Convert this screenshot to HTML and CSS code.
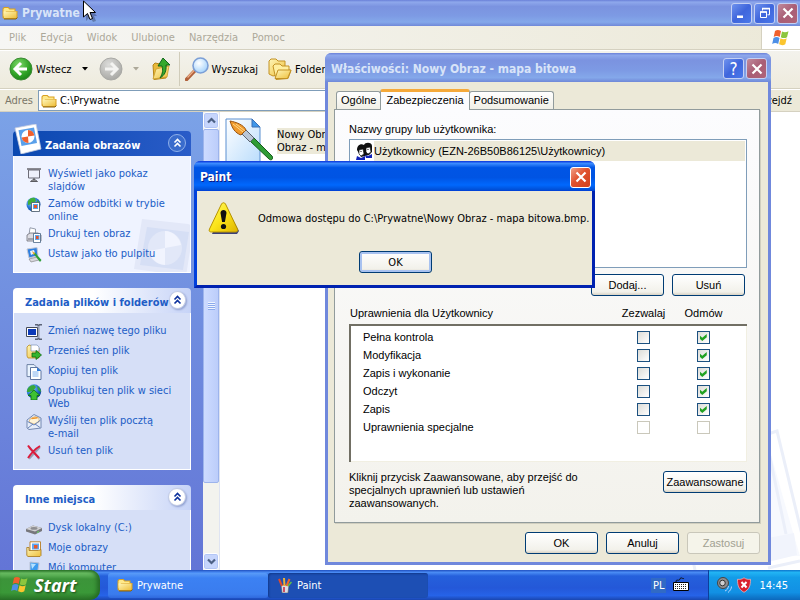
FILE: index.html
```html
<!DOCTYPE html>
<html lang="pl">
<head>
<meta charset="utf-8">
<title>Prywatne</title>
<link rel="stylesheet" href="styles.css">
</head>
<body>
<svg class="defs" aria-hidden="true">
  <defs>
    <linearGradient id="gFolder" x1="0" y1="0" x2="1" y2="1"><stop offset="0" stop-color="#fff6b8"/><stop offset="1" stop-color="#eebf3c"/></linearGradient>
    <radialGradient id="gGreen" cx=".4" cy=".3" r=".8"><stop offset="0" stop-color="#7fd86a"/><stop offset=".6" stop-color="#2fa326"/><stop offset="1" stop-color="#157a15"/></radialGradient>
    <radialGradient id="gGrey" cx=".4" cy=".3" r=".8"><stop offset="0" stop-color="#dcdcda"/><stop offset="1" stop-color="#a2a29e"/></radialGradient>
    <radialGradient id="gLens" cx=".4" cy=".35" r=".7"><stop offset="0" stop-color="#ffffff"/><stop offset="1" stop-color="#9fd0fb"/></radialGradient>
    <linearGradient id="gWarn" x1="0" y1="0" x2="1" y2="1"><stop offset="0" stop-color="#fffb6a"/><stop offset=".5" stop-color="#fbe41a"/><stop offset="1" stop-color="#dfb400"/></linearGradient>
    <linearGradient id="gPage" x1="0" y1="0" x2="1" y2="1"><stop offset="0" stop-color="#ffffff"/><stop offset="1" stop-color="#b9dcfc"/></linearGradient>
    <radialGradient id="gGlobe" cx=".35" cy=".3" r=".8"><stop offset="0" stop-color="#8fd0ff"/><stop offset=".6" stop-color="#1f6fd0"/><stop offset="1" stop-color="#0b3a86"/></radialGradient>
    <symbol id="folder" viewBox="0 0 16 16"><path d="M.5 12.500V3.500L2 2h4.500L8 3.500h5.500V6H15.500v6L14 14H2z" fill="#d9a020"/><path d="M1.500 12V4L2.500 3H6l1.500 1.500h5V6H4z" fill="#ffe98a"/><path d="M1.500 6.500h13v6l-1 .5h-11.500z" fill="url(#gFolder)"/><path d="M2 14h12l1.500-1.500" fill="none" stroke="#8a6410"/></symbol>
    <symbol id="flag" viewBox="0 0 20 20"><path d="M4 3c2-1.500 4-1.200 6 0l-1.300 6c-2-1.200-4-1.200-6 0z" fill="#f0602c"/><path d="M11 3.500c2 1 4 1.200 6.500-.3L16 9.200c-2.200 1.300-4.200 1-6.200 0z" fill="#8cc63e"/><path d="M2.500 10c2-1.200 4-1.200 6 0l-1.300 6c-2-1.200-4-1.200-6 0z" fill="#4d8fe6"/><path d="M9.500 10.300c2 1.100 4 1.200 6.200 0l-1.400 6c-2.200 1.200-4.200 1-6.200 0z" fill="#fbc52e"/></symbol>
    <symbol id="photo" viewBox="0 0 28 30"><path d="M1 4L22 0l5 25-20 5z" fill="#fff" stroke="#c3cbe0" stroke-width=".8"/><path d="M4.500 6.200L20 3.400l3 15.600L7.500 22z" fill="#5aa0ea"/><circle cx="14" cy="12.500" r="6.500" fill="#fff"/><path d="M14 12.500V6a6.500 6.500 0 0 1 6.300 5.500zM14 12.500l.5 6.500a6.500 6.500 0 0 1-6.800-5.500z" fill="#f0602c"/></symbol>
    <symbol id="slides" viewBox="0 0 16 16"><path d="M1 1h14v2H1z" fill="#8a8a92"/><path d="M2.500 3h11v8h-11z" fill="#eef0fb" stroke="#6d6d78"/><path d="M8 11v3M4.500 14.500L8 12l3.500 2.500z" stroke="#5a5a60" fill="#b8b8b8"/></symbol>
    <symbol id="prints" viewBox="0 0 16 16"><circle cx="7.500" cy="7.500" r="7" fill="url(#gGlobe)"/><path d="M2 4c2-3 4-3.500 7-3l1 3-4 3-4 1zM11 3l3 3-1 2-2-1z" fill="#3fae3c"/><path d="M5.500 5.500h8v9h-8z" fill="#fff" stroke="#456" stroke-width=".8"/><path d="M7 7h5v5H7z" fill="#58a4ee"/><path d="M8 8h3v3H8z" fill="#e8562a"/></symbol>
    <symbol id="printer" viewBox="0 0 16 16"><path d="M4 .8L9.500 2v6H3z" fill="#fff" stroke="#7c8698" stroke-width=".8"/><path d="M1 8l3-2h8l3 2v6H1z" fill="#dcdce2" stroke="#70707a" stroke-width=".8"/><path d="M2 12h6" stroke="#6b6b74"/><path d="M7.500 6.500h7v9h-7z" fill="#fff" stroke="#357" stroke-width=".7"/><path d="M9 8h4.500v5H9z" fill="#5ba8f0"/><path d="M10 9h2.500v3H10z" fill="#e5532a"/></symbol>
    <symbol id="desktop" viewBox="0 0 16 16"><path d="M1 2l10-1.500 1 8L3 11z" fill="#2f7fe0" stroke="#c4c8d4"/><path d="M4 4l4-1 1 3-4 2z" fill="#e9f4ff"/><path d="M3 12l8-2 2 3-8 2z" fill="#d8d8de" stroke="#777" stroke-width=".6"/><path d="M7 6l2-.5 6.500 7.500-1.500 2z" fill="#2fa038"/><path d="M6 4l3 2-1.500 2z" fill="#f5a632"/></symbol>
    <symbol id="rename" viewBox="0 0 16 16"><path d="M.5 3.500h11v9H.5z" fill="#fff" stroke="#444a58"/><path d="M2 5h8v6H2z" fill="#0b39b8"/><path d="M9 .8h2.500l1 1 1-1H16M12.500 2v12M9 15.200h2.500l1-1 1 1H16" stroke="#5b6377" stroke-width="1.600" fill="none"/><path d="M12.500 2v12" stroke="#c9cee0" stroke-width=".6"/></symbol>
    <symbol id="move" viewBox="0 0 16 16"><path d="M1 3l2-2 4 1 1 2h5v10H2L1 12z" fill="url(#gFolder)" stroke="#b98a1c" stroke-width=".8"/><path d="M5 1h6l2 2v4H5z" fill="#fff" stroke="#7c93b8" stroke-width=".7"/><path d="M6 9h4V6.500l5.500 4.500L10 15.500V13H6z" fill="#33b52e" stroke="#106b12" stroke-width=".8"/></symbol>
    <symbol id="copy" viewBox="0 0 16 16"><path d="M1 .6h7l3 3v9H1z" fill="#eaf4ff" stroke="#62779b" stroke-width=".9"/><path d="M4.500 3.500h7l3.500 3.200v8.800H4.500z" fill="#fff" stroke="#4f6896" stroke-width=".9"/><path d="M11 3.500l4 3.500h-4z" fill="#2b78d8"/><path d="M6.500 8h6M6.500 10h6M6.500 12h6" stroke="#7db0ee"/></symbol>
    <symbol id="publish" viewBox="0 0 16 16"><circle cx="8" cy="7.500" r="7.200" fill="url(#gGlobe)"/><path d="M1 8c0-4 3-7 7-7l2 2-3 4-4 1zM11 2c2 1 4 3 4 6l-3-2z" fill="#38a83a"/><path d="M8 6l6 5.500h-3V16H5v-4.500H2z" fill="#3fc233" stroke="#0d6d14" stroke-width=".8"/></symbol>
    <symbol id="mail" viewBox="0 0 16 16"><path d="M1 6l7-5.500L15 4v10L3 15.500 1 14z" fill="#e6edfa" stroke="#6a7fa8" stroke-width=".9"/><path d="M4 5l5-2.500L13 4v4L8 10 3 8z" fill="#fff4d8" stroke="#c08b34" stroke-width=".5"/><path d="M5.500 4.500l6-.8" stroke="#f0962a" stroke-width="1.500"/><path d="M1.500 7.500L8 11l6.500-5M2 14l5-4M14 13.500L9 10" stroke="#5c7ab6" stroke-width=".9" fill="none"/></symbol>
    <symbol id="delete" viewBox="0 0 16 16"><path d="M3.500 3.500l10 11.500M14 3L3 14.800" stroke="#9a9fb4" stroke-width="2"/><path d="M2 1.500C5 6 9 9.500 13 14M14 2C9 5 5 9.500 2 14" stroke="#dc1c3c" stroke-width="2" fill="none"/></symbol>
    <symbol id="disk" viewBox="0 0 16 16"><path d="M0 8l7-3.500L16 7v3L9 13.500 0 10.500z" fill="#77777c"/><path d="M0 8l7-3.500L16 7l-7 3.500z" fill="#d0d0d2"/><ellipse cx="8" cy="7.400" rx="3.500" ry="1.300" fill="#8e8e92"/><path d="M11 11.500l2-1" stroke="#5ee05a"/></symbol>
    <symbol id="pictures" viewBox="0 0 16 16"><path d="M4 .8h10.500v11H4z" fill="#fff" stroke="#b77c24" stroke-width=".9"/><path d="M6 2.500h7v6H6z" fill="#5da6f0"/><path d="M8 4h3.500v3.500H8z" fill="#e8582a"/><path d="M.8 6.500H3v3h9.500l2.500-1v6l-1 1H2l-1.200-1z" fill="url(#gFolder)" stroke="#a47518" stroke-width=".8"/></symbol>
    <symbol id="computer" viewBox="0 0 16 16"><path d="M4 1l9 1-1.500 10-7.500-2z" fill="#3d9bef" stroke="#b8c0d4"/><path d="M5 2.500l5 .5-4 5z" fill="#b6e2ff"/><path d="M3 13l8 2 2-2" fill="none" stroke="#888"/></symbol>
    <symbol id="chev" viewBox="0 0 9 11"><path d="M1.500 4.500l3-3 3 3M1.500 8.500l3-3 3 3" fill="none" stroke="currentColor" stroke-width="1.600"/></symbol>
    <symbol id="x" viewBox="0 0 12 12"><path d="M1.500 1.500l9 9M10.500 1.500l-9 9" stroke="#fff" stroke-width="2.200"/></symbol>
    <symbol id="arrow" viewBox="0 0 9 7"><path d="M1 1.500l3.500 3.500L8 1.500" fill="none" stroke="#4d6185" stroke-width="2.200"/></symbol>
  </defs>
</svg>

<div class="desktop">
  <main class="explorer">
    <header class="title title-main">
      <svg class="i16"><use href="#folder"/></svg>
      <h1>Prywatne</h1>
      <button class="cap" aria-label="Minimalizuj"><svg viewBox="0 0 12 12"><path d="M1 8.500h6v2.500H1z" fill="#fff"/></svg></button>
      <button class="cap" aria-label="Przywróć"><svg viewBox="0 0 12 12"><path d="M3.500 3.500V1.800h7v6H8.500M1.500 5h6v5.500h-6z" fill="none" stroke="#fff"/><path d="M3 1.500h8M1 5h7" stroke="#fff" stroke-width="1.600"/></svg></button>
      <button class="cap cap-dim" aria-label="Zamknij"><svg><use href="#x"/></svg></button>
    </header>
    <nav class="menubar">
      <button>Plik</button><button>Edycja</button><button>Widok</button><button>Ulubione</button><button>Narzędzia</button><button>Pomoc</button>
      <span class="brand"><svg><use href="#flag"/></svg></span>
    </nav>
    <div class="toolbar">
      <button class="tool"><svg class="i24" viewBox="0 0 24 24"><circle cx="12" cy="12" r="11" fill="url(#gGreen)" stroke="#3c8a34"/><path d="M12 6l-6 6 6 6M6.500 12H18" fill="none" stroke="#fff" stroke-width="3"/></svg>Wstecz</button>
      <button class="drop" aria-label="Historia wstecz"><svg viewBox="0 0 6 4"><path d="M0 0h6L3 3.500z"/></svg></button>
      <button class="tool" aria-label="Dalej"><svg class="i24" viewBox="0 0 24 24"><circle cx="12" cy="12" r="11" fill="url(#gGrey)" stroke="#a9a9a5"/><path d="M12 6l6 6-6 6M17.500 12H6" fill="none" stroke="#f3f3f1" stroke-width="3"/></svg></button>
      <button class="drop drop-off" aria-label="Historia dalej"><svg viewBox="0 0 6 4"><path d="M0 0h6L3 3.500z"/></svg></button>
      <button class="tool" aria-label="Do góry"><svg class="i24" viewBox="0 0 24 24"><path d="M3 8l2-2 5 1 2 2 5-1-1 13-12 1.500z" fill="#e9b93a" stroke="#b5851a"/><path d="M3 22l3-10 13-3-2 11z" fill="url(#gFolder)" stroke="#c99a28" stroke-width=".8"/><path d="M13 1l7 7h-4c.5 6-1 10-6 13 3-5 3-8 2-12H8z" fill="#35a82c" stroke="#12661a"/></svg></button>
      <span class="sep"></span>
      <button class="tool"><svg class="i24" viewBox="0 0 24 24"><path d="M1.500 22.500l9-9.500" stroke="#b0603a" stroke-width="3.500" stroke-linecap="round"/><path d="M2.500 20.500l7-7.500" stroke="#efb08a" stroke-width="1.200"/><circle cx="15.500" cy="8.500" r="7.500" fill="url(#gLens)" stroke="#7c9fd6" stroke-width="1.600"/></svg>Wyszukaj</button>
      <button class="tool tool-last"><svg class="i24" viewBox="0 0 24 24"><path d="M1 4l2-2h5l2 2h7v12L5 19 1 17z" fill="url(#gFolder)" stroke="#c39224"/><path d="M5 9l2-2h5l2 2h7v4l2 .5-3 8-12 1z" fill="#ffefa0" stroke="#c39224"/><path d="M7 21.500L10 13h13l-3.500 8.500z" fill="url(#gFolder)" stroke="#c39224"/></svg>Foldery</button>
    </div>
    <div class="address">
      <label for="path">Adres</label>
      <div class="field"><svg class="i16"><use href="#folder"/></svg><input id="path" type="text" value="C:\Prywatne"></div>
      <button>Przejdź</button>
    </div>
    <div class="content">
      <aside class="side">
        <section class="panel panel-main">
          <header><svg class="photo"><use href="#photo"/></svg><h2>Zadania obrazów</h2><button class="round" aria-label="Zwiń"><svg><use href="#chev"/></svg></button></header>
          <ul>
            <li><svg class="i16"><use href="#slides"/></svg><a href="#">Wyświetl jako pokaz slajdów</a></li>
            <li><svg class="i16"><use href="#prints"/></svg><a href="#">Zamów odbitki w trybie online</a></li>
            <li><svg class="i16"><use href="#printer"/></svg><a href="#">Drukuj ten obraz</a></li>
            <li><svg class="i16"><use href="#desktop"/></svg><a href="#">Ustaw jako tło pulpitu</a></li>
          </ul>
          <svg class="ghost" viewBox="0 0 57 54"><path d="M9 1l46 5 6 2-8 50-52-7z" fill="#e3e8f8"/><path d="M14 9l42 5-6 38-43-5z" fill="#d6dff5"/><circle cx="32" cy="30" r="17" fill="#e2e8f8"/><path d="M32 30V13a17 17 0 0 1 16 14zM32 30v17a17 17 0 0 1-16-14z" fill="#f1f4fe"/></svg>
        </section>
        <section class="panel">
          <header><h2>Zadania plików i folderów</h2><button class="round" aria-label="Zwiń"><svg><use href="#chev"/></svg></button></header>
          <ul>
            <li><svg class="i16"><use href="#rename"/></svg><a href="#">Zmień nazwę tego pliku</a></li>
            <li><svg class="i16"><use href="#move"/></svg><a href="#">Przenieś ten plik</a></li>
            <li><svg class="i16"><use href="#copy"/></svg><a href="#">Kopiuj ten plik</a></li>
            <li><svg class="i16"><use href="#publish"/></svg><a href="#">Opublikuj ten plik w sieci Web</a></li>
            <li><svg class="i16"><use href="#mail"/></svg><a href="#">Wyślij ten plik pocztą<br>e-mail</a></li>
            <li><svg class="i16"><use href="#delete"/></svg><a href="#">Usuń ten plik</a></li>
          </ul>
        </section>
        <section class="panel">
          <header><h2>Inne miejsca</h2><button class="round" aria-label="Zwiń"><svg><use href="#chev"/></svg></button></header>
          <ul>
            <li><svg class="i16"><use href="#disk"/></svg><a href="#">Dysk lokalny (C:)</a></li>
            <li><svg class="i16"><use href="#pictures"/></svg><a href="#">Moje obrazy</a></li>
            <li><svg class="i16"><use href="#computer"/></svg><a href="#">Mój komputer</a></li>
          </ul>
        </section>
      </aside>
      <div class="scroll">
        <button aria-label="W górę"><svg class="up"><use href="#arrow"/></svg></button>
        <div class="thumb"><i></i></div>
        <span class="track"></span>
        <button aria-label="W dół"><svg><use href="#arrow"/></svg></button>
      </div>
      <div class="files">
        <div class="file">
          <svg class="i48" viewBox="0 0 48 48"><path d="M1 2h26l8 8v37H1z" fill="url(#gPage)" stroke="#5b8fd0"/><path d="M27 2l8 8h-8z" fill="#3f97ea" stroke="#3a6eb4"/><path d="M25 24l4-3 18 18c2 3-1 5-3 3z" fill="#2f9c35" stroke="#155c1c"/><path d="M17 17l4-4 8 8-4 4z" fill="#b9c6d6" stroke="#5c6470"/><path d="M5 4c6 1 14 4 16 9l-5 5C10 16 7 11 5 4z" fill="#f09a2c" stroke="#9a5410"/><path d="M8 7l10 8M11 7l9 7" stroke="#ffd98a"/></svg>
          <span>Nowy Obraz<br>Obraz - mapa</span>
        </div>
        <svg class="watermark" viewBox="0 0 160 150"><path d="M128 24l26 92 6 20H128z" fill="#f7f9fe"/><path d="M128 14l9-3 25 104M128 28l18 86" fill="none" stroke="#ebeff9" stroke-width="3"/><path d="M128 118l26-5 3 22-29 7z" fill="#f1f4fc"/><path d="M40 136h12l3 14M128 148l32-7" fill="none" stroke="#ebeff9" stroke-width="3"/></svg>
      </div>
    </div>
  </main>

  <section class="window props" role="dialog" aria-label="Właściwości: Nowy Obraz - mapa bitowa">
    <header class="title">
      <h2>Właściwości: Nowy Obraz - mapa bitowa</h2>
      <button class="cap cap-help" aria-label="Pomoc">?</button>
      <button class="cap cap-dim" aria-label="Zamknij"><svg><use href="#x"/></svg></button>
    </header>
    <div class="props-body">
      <div class="tabs" role="tablist">
        <button role="tab">Ogólne</button><button role="tab" class="on" aria-selected="true">Zabezpieczenia</button><button role="tab">Podsumowanie</button>
      </div>
      <div class="sheet">
        <p class="caption">Nazwy grupy lub użytkownika:</p>
        <div class="users">
          <div class="user"><svg class="i18" viewBox="0 0 18 18"><path d="M2 8c0-5 4-7 7-5 1-3 8-3 8 1v6l-3 3-8 2z" fill="#111"/><path d="M4 8l4-1 1 5-3 2-2-2zM11 6l4-1 1 5-3 2-2-2z" fill="#fff" stroke="#111" stroke-width=".6"/><path d="M2 14l4 2 4-2v4H1zM10 13l3 1 4-2v4h-6z" fill="#1223b8"/><path d="M5.500 9.500h1M12.500 7.500h1" stroke="#111"/></svg><span>Użytkownicy (EZN-26B50B86125\Użytkownicy)</span></div>
        </div>
        <div class="row-end"><button class="btn">Dodaj...</button><button class="btn">Usuń</button></div>
        <table class="perms">
          <thead><tr><th>Uprawnienia dla Użytkownicy</th><th>Zezwalaj</th><th>Odmów</th></tr></thead>
          <tbody>
            <tr><td>Pełna kontrola</td><td><input type="checkbox" aria-label="Pełna kontrola: zezwalaj"></td><td><input type="checkbox" checked aria-label="Pełna kontrola: odmów"></td></tr>
            <tr><td>Modyfikacja</td><td><input type="checkbox" aria-label="Modyfikacja: zezwalaj"></td><td><input type="checkbox" checked aria-label="Modyfikacja: odmów"></td></tr>
            <tr><td>Zapis i wykonanie</td><td><input type="checkbox" aria-label="Zapis i wykonanie: zezwalaj"></td><td><input type="checkbox" checked aria-label="Zapis i wykonanie: odmów"></td></tr>
            <tr><td>Odczyt</td><td><input type="checkbox" aria-label="Odczyt: zezwalaj"></td><td><input type="checkbox" checked aria-label="Odczyt: odmów"></td></tr>
            <tr><td>Zapis</td><td><input type="checkbox" aria-label="Zapis: zezwalaj"></td><td><input type="checkbox" checked aria-label="Zapis: odmów"></td></tr>
            <tr><td>Uprawnienia specjalne</td><td><input type="checkbox" disabled aria-label="Uprawnienia specjalne: zezwalaj"></td><td><input type="checkbox" disabled aria-label="Uprawnienia specjalne: odmów"></td></tr>
          </tbody>
        </table>
        <div class="advanced">
          <p>Kliknij przycisk Zaawansowane, aby przejść do specjalnych uprawnień lub ustawień zaawansowanych.</p>
          <button class="btn btn-wide">Zaawansowane</button>
        </div>
      </div>
      <footer class="row-end"><button class="btn">OK</button><button class="btn">Anuluj</button><button class="btn" disabled>Zastosuj</button></footer>
    </div>
  </section>

  <section class="window paint" role="alertdialog" aria-label="Paint">
    <header class="title title-active">
      <h2>Paint</h2>
      <button class="cap cap-close" aria-label="Zamknij"><svg><use href="#x"/></svg></button>
    </header>
    <div class="paint-body">
      <div class="message">
        <svg class="i32" viewBox="0 0 32 32"><path d="M17 3l14 26-2 3H4z" fill="#3a3f78"/><path d="M13.500 2c1-1.700 3-1.700 4 0l12 25c.8 2-.2 3-2 3h-24C1.500 30 .6 29 1.500 27z" fill="url(#gWarn)" stroke="#b89400"/><path d="M12.500 11c0-4 6-4 6 0l-1.600 9h-2.800z" fill="#111"/><circle cx="15.500" cy="24.500" r="2.600" fill="#111"/></svg>
        <p>Odmowa dostępu do C:\Prywatne\Nowy Obraz - mapa bitowa.bmp.</p>
      </div>
      <button class="btn btn-default">OK</button>
    </div>
  </section>

  <svg class="cursor" viewBox="0 0 14 22"><path d="M3 4v17l4-4 3 5 3-1-2-5h3z" fill="#000" opacity=".25"/><path d="M.5 1v16l4-3.500 2.500 6 2.500-1L7 12.500h5.500z" fill="#fff" stroke="#000"/></svg>
</div>

<footer class="taskbar">
  <button class="start"><svg><use href="#flag"/></svg>Start</button>
  <button class="task"><svg class="i16"><use href="#folder"/></svg>Prywatne</button>
  <button class="task task-on"><svg class="i16" viewBox="0 0 16 16"><path d="M4 8h8l-1 8H5z" fill="#d8dce6" stroke="#555" stroke-width=".6"/><path d="M5 9L2 2" stroke="#e04a2a" stroke-width="2"/><path d="M7.500 9L7 1" stroke="#f0b030" stroke-width="2"/><path d="M9.500 9l3-7" stroke="#f06a2a" stroke-width="2"/><path d="M11 9l3.500-4" stroke="#5fc04a" stroke-width="1.500"/><path d="M7 10v5" stroke="#c23" stroke-width="1.500"/></svg>Paint</button>
  <span class="lang">PL</span>
  <svg class="i16 kb" viewBox="0 0 16 16"><path d="M3 5c0-4 3 0 4-3s3 1 4-1" fill="none" stroke="#111"/><path d="M.5 5.500h15v8H.5z" fill="#fff" stroke="#000"/><path d="M2 7.500h12M2 9.500h12M2 11.500h12" stroke="#222" stroke-dasharray="1 1"/></svg>
  <div class="tray">
    <svg class="i16" viewBox="0 0 16 16"><circle cx="6" cy="6" r="5.500" fill="#8d8d90" stroke="#444"/><circle cx="5.500" cy="6" r="2.800" fill="#d0d0d2" stroke="#333"/><path d="M8 14c2-1 3-2 3.500-5M11 15.500c2-1.500 3.500-4 3.500-6" fill="none" stroke="#b8d4ff"/></svg>
    <svg class="i16" viewBox="0 0 16 16"><path d="M8 .8c2 1.500 4 1.800 6.500 1.500 0 6-1 10-6.500 13C2.500 12.300 1.500 8.300 1.500 2.300 4 2.600 6 2.300 8 .8z" fill="#d8202c" stroke="#fbb" stroke-width=".7"/><path d="M5.500 5l5 5.500M10.500 5l-5 5.500" stroke="#fff" stroke-width="2"/></svg>
    <time>14:45</time>
  </div>
</footer>
</body>
</html>
```
FILE: styles.css
```css
* { box-sizing: border-box; }
html, body { height: 100%; }
body {
  margin: 0;
  display: flex;
  flex-direction: column;
  overflow: hidden;
  font: 11px/13px "DejaVu Sans Condensed", "DejaVu Sans", sans-serif;
  color: #000;
}
h1, h2, p, ul { margin: 0; padding: 0; font-size: inherit; }
ul { list-style: none; }
button, input { font: inherit; color: inherit; margin: 0; padding: 0; border: 0; background: none; }
svg { display: block; flex: none; }
.defs { position: absolute; width: 0; height: 0; }
.i16 { width: 16px; height: 16px; }
.i18 { width: 18px; height: 18px; }
.i24 { width: 24px; height: 24px; }
.i32 { width: 32px; height: 32px; }
.i48 { width: 48px; height: 48px; }

.desktop { position: relative; flex: 1; min-height: 0; display: flex; }
.explorer { flex: 1; min-width: 0; display: flex; flex-direction: column; background: #ece9d8; }

/* Title bars */
.title {
  display: flex;
  align-items: center;
  gap: 2px;
  height: 29px;
  padding: 2px 4px 0 6px;
  font: bold 12px/16px "DejaVu Sans Condensed", "DejaVu Sans", sans-serif;
  color: #d8e4f8;
  background: linear-gradient(#6a80d8, #8ea8ec 8%, #7b93e0 25%, #7d9ae4 60%, #84a8ea 85%, #7088d8);
  border-radius: 6px 6px 0 0;
}
.title h1, .title h2 { flex: 1; white-space: nowrap; }
.title-main { height: 26px; padding: 0 2px; border-radius: 0; }
.title-main h1 { padding-left: 2px; }
.title-active {
  color: #fff;
  text-shadow: 1px 1px #0a1883;
  background: linear-gradient(#0831d9, #3c8cff 8%, #0055e5 22%, #0054e3 55%, #0068fd 80%, #0050d8 95%, #003dd7);
}
.cap {
  display: grid;
  place-items: center;
  width: 21px;
  height: 21px;
  border: 1px solid #c4d0f4;
  border-radius: 3px;
  background: linear-gradient(135deg, #6f92ee, #3f66dc 50%, #4a78ea);
}
.cap svg { width: 12px; height: 12px; }
.cap-help { font: 17px/18px "DejaVu Sans Condensed", sans-serif; color: #fff; }
.cap-dim { background: linear-gradient(135deg, #c08a9c, #a95e76 50%, #b06478); }
.cap-close { border-color: #fff; background: linear-gradient(135deg, #f0a088, #e0522e 45%, #d0401c); }

/* Explorer bars */
.menubar {
  display: flex;
  height: 24px;
  padding-left: 9px;
  gap: 14px;
  color: #aca899;
  background: linear-gradient(90deg, #f6f6f4, #ece9d8);
  border-bottom: 1px solid #d5d1c0;
}
.brand { display: grid; place-items: center; margin-left: auto; width: 39px; background: #fff; border-left: 1px solid #d5d1c0; }
.brand svg { width: 20px; height: 20px; }
.toolbar {
  display: flex;
  align-items: center;
  height: 39px;
  padding-left: 9px;
  gap: 5px;
  background: linear-gradient(#fff 1px, #f3f2ec 1px, #eeebdd);
  border-bottom: 1px solid #d5d1c0;
}
.tool { display: flex; align-items: center; gap: 3px; white-space: nowrap; }
.tool-last { padding-left: 5px; }
.drop { width: 17px; }
.drop svg { width: 6px; height: 4px; margin: 0 auto; }
.drop-off path { fill: #aca899; }
.sep { width: 1px; height: 34px; background: #d0ccba; }
.address {
  display: flex;
  align-items: center;
  height: 23px;
  padding: 0 8px 0 5px;
  gap: 5px;
  border-top: 1px solid #fff;
  border-bottom: 1px solid #d5d1c0;
}
.address label { color: #7a7768; }
.field { flex: 1; display: flex; align-items: center; gap: 3px; height: 21px; padding-left: 2px; background: #fff; border: 1px solid #7f9db9; }
.field input { flex: 1; outline: 0; }
.content { flex: 1; min-height: 0; display: flex; background: #fff; }

/* Task pane */
.side {
  flex: none;
  width: 203px;
  padding: 19px 12px 0 13px;
  display: flex;
  flex-direction: column;
  gap: 15px;
  overflow: hidden;
  background: linear-gradient(#7ba2e7, #6375d6);
}
.panel { flex: none; position: relative; color: #215dc6; }
.panel header {
  display: flex;
  align-items: center;
  height: 25px;
  padding: 3px 5px 0 12px;
  border-radius: 4px 4px 0 0;
  background: linear-gradient(90deg, #fff 45%, #c6d3f7);
}
.panel h2 { flex: 1; font-weight: bold; white-space: nowrap; }
.panel ul {
  display: flex;
  flex-direction: column;
  gap: 4px;
  padding: 11px 12px 9px;
  background: #d6dff7;
  border: 1px solid #fff;
  border-top: 0;
}
.panel li { display: flex; gap: 6px; min-height: 16px; }
.panel a { position: relative; z-index: 1; color: #215dc6; text-decoration: none; }
.panel-main header { color: #fff; padding-left: 32px; background: linear-gradient(90deg, #0a48b0, #2a5cc8); }
.panel-main ul { background: #eff3ff; }
.photo { position: absolute; left: 1px; top: -7px; width: 28px; height: 30px; }
.ghost { position: absolute; right: 1px; bottom: 1px; width: 57px; height: 54px; }
.round {
  display: grid;
  place-items: center;
  width: 18px;
  height: 18px;
  margin-top: -4px;
  border: 1px solid #c2cbe4;
  border-radius: 50%;
  background: #fff;
  color: #0a2f9c;
  box-shadow: 1px 1px 2px #8f9fd0;
}
.round svg { width: 9px; height: 11px; }
.panel-main .round { background: #3a6ccc; border-color: #8fb0ea; color: #fff; box-shadow: none; }

.scroll { flex: none; width: 17px; display: flex; flex-direction: column; background: #f3f3ee; border-right: 1px solid #dfe4f2; }
.scroll button { height: 17px; display: grid; place-items: center; border: 1px solid #fff; border-radius: 3px; background: #c6d5fc; box-shadow: inset 0 0 0 1px #b3c6f6; }
.scroll button svg { width: 9px; height: 7px; }
.scroll .up { transform: rotate(180deg); }
.thumb { flex: 1 1 354px; display: grid; place-items: center; border: 1px solid #9db4ec; border-radius: 2px; background: linear-gradient(90deg, #cddbff, #bccdfa); }
.thumb i { width: 7px; height: 8px; background: repeating-linear-gradient(#eef4fe 0 1px, #8caaec 1px 2px); }
.track { flex: 0 1 70px; }

.files { position: relative; flex: 1; min-width: 0; padding: 5px; overflow: hidden; }
.file { display: flex; gap: 4px; align-items: center; }
.file span { background: #ece9d8; white-space: nowrap; }
.watermark { position: absolute; right: 0; bottom: 0; width: 160px; height: 150px; }

/* Windows */
.window { position: absolute; background: #ece9d8; border-radius: 7px 7px 0 0; }
.props {
  left: 325px;
  top: 53px;
  width: 446px;
  border: 3px solid #7088dc;
  border-top-width: 0;
  font-family: "Liberation Sans", Arial, sans-serif;
}
.props .title { margin: 0 -3px; }
.props-body { padding: 8px 8px 8px 6px; }
.tabs { display: flex; align-items: flex-end; padding: 0 2px; font-size: 11px; }
.tabs button {
  height: 18px;
  padding: 0 4px;
  border: 1px solid #919b9c;
  border-bottom: 0;
  border-radius: 3px 3px 0 0;
  background: linear-gradient(#fff, #f0efe6);
}
.tabs .on {
  position: relative;
  height: 21px;
  padding: 0 5px 2px;
  margin: -1px -1px -1px;
  border-top: 3px solid #f5a93a;
  background: #fcfcfe;
}
.sheet {
  padding: 13px 12px 12px 14px;
  border: 1px solid #919b9c;
  background: linear-gradient(#fcfcfe, #f3f2ec);
  box-shadow: 1px 1px #d0ceBf;
}
.users { height: 129px; margin-top: 3px; padding: 1px; background: #fff; border: 1px solid #7f9db9; }
.user { display: flex; align-items: center; gap: 1px; height: 20px; padding-left: 4px; }
.user span { flex: 1; line-height: 20px; background: #ece9d8; }
.row-end { display: flex; justify-content: flex-end; gap: 8px; }
.sheet .row-end { padding: 6px 2px 11px 0; }
.btn {
  width: 73px;
  height: 22px;
  border: 1px solid #003c74;
  border-radius: 3px;
  background: linear-gradient(#fff, #f2f1ea 85%, #d8d2c4);
}
.btn:disabled { color: #a1a192; border-color: #c9c7ba; background: #f5f4ea; }
.btn-wide { width: 84px; flex: none; }
.btn-default { box-shadow: inset 0 0 0 2px #a8c2f0; }
.perms { width: 100%; border-collapse: collapse; }
.perms th, .perms td { padding: 0; height: 18px; text-align: center; font-weight: normal; vertical-align: top; }
.perms th { line-height: 13px; }
.perms td { line-height: 18px; }
.perms th:first-child { text-align: left; }
.perms td:first-child { text-align: left; padding-left: 12px; }
.perms th:nth-child(2) { width: 60px; }
.perms tr > :last-child { width: 73px; padding-right: 13px; }
.perms tbody { background: #fff; border: 2px solid #716f64; border-right: 1px solid #f1efe2; border-bottom: 1px solid #f1efe2; }
.perms tbody tr:first-child td { padding-top: 2px; }
.perms tbody tr:last-child td { padding-bottom: 25px; }
.perms input {
  appearance: none;
  display: block;
  width: 13px;
  height: 13px;
  margin: 3px auto 0;
  border: 1px solid #1c5180;
  background: linear-gradient(135deg, #dcdcd7, #fff);
}
.perms input:checked::before {
  content: "";
  display: block;
  width: 7px;
  height: 7px;
  margin: 2px;
  background: #21a121;
  clip-path: polygon(0 20%, 36% 55%, 100% 0, 100% 45%, 36% 100%, 0 68%);
}
.perms input:disabled { border-color: #cac8bb; background: #fff; }
.advanced { display: flex; justify-content: space-between; align-items: flex-start; padding: 9px 0 0; }
.advanced p { width: 240px; }
.props footer { padding-top: 9px; }

.paint { left: 194px; top: 161px; width: 401px; border: 3px solid #0040dc; border-top-width: 0; border-right-color: #0022b0; border-bottom-color: #0022b0; }
.paint .title { margin: 0 -3px; height: 30px; }
.paint-body { display: flex; flex-direction: column; align-items: center; gap: 17px; padding: 11px 9px 12px 11px; }
.message { align-self: stretch; display: flex; gap: 18px; align-items: center; white-space: nowrap; }
.cursor { position: absolute; left: 83px; top: 0; width: 14px; height: 22px; }

/* Taskbar */
.taskbar {
  flex: none;
  display: flex;
  align-items: center;
  height: 30px;
  color: #fff;
  background: linear-gradient(#1f4fc0, #4a8cf4 8%, #2560dc 20%, #2458d8 60%, #2663e8 85%, #1a46b0);
}
.start {
  display: flex;
  align-items: center;
  gap: 4px;
  width: 100px;
  height: 30px;
  margin-right: 8px;
  padding-left: 10px;
  border-radius: 0 10px 10px 0;
  font: italic bold 18px/22px "Open Sans", "Noto Sans", sans-serif;
  text-shadow: 1px 1px 2px #1c4a18;
  background: linear-gradient(#2f7a2c, #6cc065 10%, #3c943a 30%, #3a9838 75%, #2a7428);
  box-shadow: inset -3px 0 4px #256a24;
}
.start svg { width: 20px; height: 20px; }
.task {
  flex: 0 1 160px;
  display: flex;
  align-items: center;
  gap: 4px;
  height: 25px;
  padding-left: 9px;
  border-radius: 3px;
  background: linear-gradient(#5a9cf8, #3c81f3 20%, #3a7cee 85%, #2f68dc);
}
.task-on { background: #1d4fb4; box-shadow: inset 1px 1px 2px #123a8c; }
.lang { margin-left: auto; padding: 1px 2px; background: #316ac5; }
.kb { margin: 0 19px 0 7px; }
.tray {
  display: flex;
  align-items: center;
  gap: 3px;
  height: 30px;
  padding: 0 12px 0 8px;
  border-left: 1px solid #0c3f9c;
  background: linear-gradient(#0d74cc, #22b4f4 8%, #139ce8 25%, #1290e4 75%, #0c68bc);
}
.tray time { padding-left: 4px; }
```
